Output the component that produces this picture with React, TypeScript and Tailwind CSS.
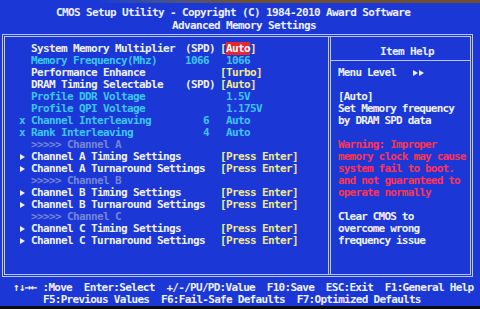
import React from "react";

const WHITE = "text-[#eef0ff]";
const CYAN = "text-[#3ec4f4]";
const DIM = "text-[#7484d8]";
const YELLOW = "text-[#f2e88a]";
const RED = "text-[#ff3355]";

function Tri() {
  return (
    <svg width="6" height="12" viewBox="0 0 6 12" className="block">
      <polygon points="1,3 6,6 1,9" fill="#eef0ff" />
    </svg>
  );
}

type RowProps = {
  marker?: "x" | "tri" | "";
  label: string;
  labelColor: string;
  mid?: string;
  midColor?: string;
  value?: React.ReactNode;
  wide?: boolean;
};

function Row({ marker = "", label, labelColor, mid = "", midColor = WHITE, value, wide }: RowProps) {
  return (
    <div className="flex h-[12px] items-center whitespace-pre leading-[12px]">
      <div className="w-[12px] shrink-0">
        {marker === "x" && <span className={CYAN}>x</span>}
        {marker === "tri" && <Tri />}
      </div>
      {wide ? (
        <div className={`w-[189px] shrink-0 ${labelColor}`}>{label}</div>
      ) : (
        <>
          <div className={`w-[154px] shrink-0 ${labelColor}`}>{label}</div>
          <div className={`w-[35px] shrink-0 ${midColor}`}>{mid}</div>
        </>
      )}
      <div className="shrink-0">{value}</div>
    </div>
  );
}

export default function App() {
  const press = <span className={YELLOW}>[Press Enter]</span>;
  return (
    <div
      className="w-[480px] h-[309px] overflow-hidden bg-[#1b38d6] text-[11px] tracking-[-0.62px] font-bold flex flex-col"
      style={{ fontFamily: '"DejaVu Sans Mono", "Liberation Mono", monospace' }}
    >
      <div className="h-[3px] shrink-0 bg-linear-to-r from-[#1b38d6] from-20% to-[#6e5030] to-50%" />
      <div className="pt-[3px] shrink-0">
        <div className={`h-[13px] leading-[13px] pl-[56px] whitespace-pre ${WHITE}`}>
          CMOS Setup Utility - Copyright (C) 1984-2010 Award Software
        </div>
        <div className={`h-[13px] leading-[13px] pl-[172px] whitespace-pre ${WHITE}`}>
          Advanced Memory Settings
        </div>
      </div>
      <div className="mt-[2px] ml-[2px] w-[471px] h-[243px] shrink-0 border-[3px] border-double border-[#b8c4f4] flex">
        <div className="w-[323px] shrink-0 pt-[6px] pl-[14px]">
          <Row
            label="System Memory Multiplier"
            labelColor={WHITE}
            mid="(SPD)"
            value={
              <span className={YELLOW}>
                [<span className="bg-[#e8262e] text-white">Auto</span>]
              </span>
            }
          />
          <Row label="Memory Frequency(Mhz)" labelColor={CYAN} mid="1066" midColor={CYAN} value={<span className={CYAN}> 1066</span>} />
          <Row label="Performance Enhance" labelColor={WHITE} value={<span className={YELLOW}>[Turbo]</span>} />
          <Row label="DRAM Timing Selectable" labelColor={WHITE} mid="(SPD)" value={<span className={YELLOW}>[Auto]</span>} />
          <Row label="Profile DDR Voltage" labelColor={CYAN} value={<span className={CYAN}> 1.5V</span>} />
          <Row label="Profile QPI Voltage" labelColor={CYAN} value={<span className={CYAN}> 1.175V</span>} />
          <Row marker="x" label="Channel Interleaving" labelColor={CYAN} mid="   6" midColor={CYAN} value={<span className={CYAN}> Auto</span>} />
          <Row marker="x" label="Rank Interleaving" labelColor={CYAN} mid="   4" midColor={CYAN} value={<span className={CYAN}> Auto</span>} />
          <Row label=">>>>> Channel A" labelColor={DIM} />
          <Row marker="tri" wide label="Channel A Timing Settings" labelColor={WHITE} value={press} />
          <Row marker="tri" wide label="Channel A Turnaround Settings" labelColor={WHITE} value={press} />
          <Row label=">>>>> Channel B" labelColor={DIM} />
          <Row marker="tri" wide label="Channel B Timing Settings" labelColor={WHITE} value={press} />
          <Row marker="tri" wide label="Channel B Turnaround Settings" labelColor={WHITE} value={press} />
          <Row label=">>>>> Channel C" labelColor={DIM} />
          <Row marker="tri" wide label="Channel C Timing Settings" labelColor={WHITE} value={press} />
          <Row marker="tri" wide label="Channel C Turnaround Settings" labelColor={WHITE} value={press} />
        </div>
        <div className="flex-1 border-l-[3px] border-double border-[#b8c4f4] flex flex-col">
          <div className="h-[24px] shrink-0 border-b border-[#b8c4f4] pt-[9px] pl-[49px]">
            <div className={`h-[12px] leading-[12px] whitespace-pre ${WHITE}`}>Item Help</div>
          </div>
          <div className="pt-[6px] pl-[7px] leading-[12px] whitespace-pre tracking-[-0.82px]">
            <div className={`h-[12px] flex items-center ${WHITE}`}>
              <span>Menu Level  </span>
              <svg width="14" height="12" viewBox="0 0 14 12" className="ml-[4px]">
                <polygon points="1,3 6,6 1,9" fill="#eef0ff" />
                <polygon points="7,3 12,6 7,9" fill="#eef0ff" />
              </svg>
            </div>
            <div className="h-[12px]" />
            <div className={`h-[12px] ${WHITE}`}>[Auto]</div>
            <div className={`h-[12px] ${WHITE}`}>Set Memory frequency</div>
            <div className={`h-[12px] ${WHITE}`}>by DRAM SPD data</div>
            <div className="h-[12px]" />
            <div className={`h-[12px] ${RED}`}>Warning: Improper</div>
            <div className={`h-[12px] ${RED}`}>memory clock may cause</div>
            <div className={`h-[12px] ${RED}`}>system fail to boot.</div>
            <div className={`h-[12px] ${RED}`}>and not guaranteed to</div>
            <div className={`h-[12px] ${RED}`}>operate normally</div>
            <div className="h-[12px]" />
            <div className={`h-[12px] ${WHITE}`}>Clear CMOS to</div>
            <div className={`h-[12px] ${WHITE}`}>overcome wrong</div>
            <div className={`h-[12px] ${WHITE}`}>frequency issue</div>
          </div>
        </div>
      </div>
      <div className={`pt-[5px] shrink-0 leading-[12px] whitespace-pre tracking-[-0.72px] ${WHITE}`}>
        <div className="h-[12px] pl-[13px]">↑↓→← :Move  Enter:Select  +/-/PU/PD:Value  F10:Save  ESC:Exit  F1:General Help</div>
        <div className="h-[12px] pl-[43px]">F5:Previous Values  F6:Fail-Safe Defaults  F7:Optimized Defaults</div>
      </div>
      <div className="flex-1 bg-[#0c0c14]" />
    </div>
  );
}
